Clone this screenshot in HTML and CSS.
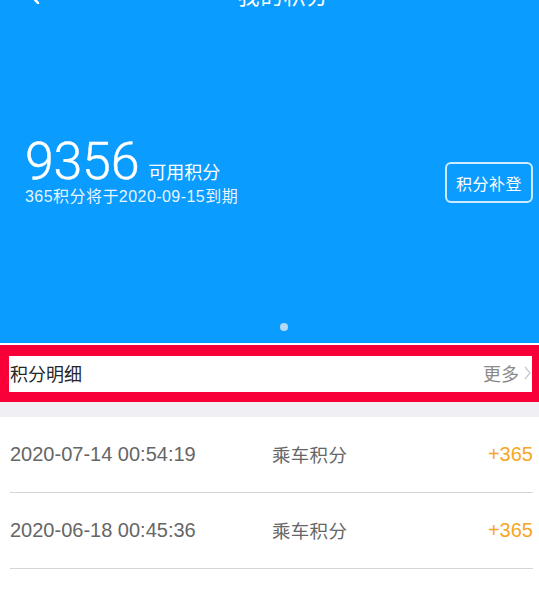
FILE: index.html
```html
<!DOCTYPE html>
<html lang="zh-CN">
<head>
<meta charset="utf-8">
<title>我的积分</title>
<link rel="stylesheet" href="styles.css">
</head>
<body>
<div class="page">
  <header class="hero">
    <nav class="nav">
      <span class="back">
        <svg width="12" height="20" viewBox="0 0 12 20"><polyline points="10,1 2,10 10,19" fill="none" stroke="#fff" stroke-width="2.6" stroke-linecap="round" stroke-linejoin="round"/></svg>
      </span>
      <span class="title">我的积分</span>
      <span></span>
    </nav>
    <section class="summary">
      <div class="points">
        <div class="points-line">
          <span class="points-num">9356</span>
          <span class="points-label">可用积分</span>
        </div>
        <div class="expire">365积分将于2020-09-15到期</div>
      </div>
      <button class="supplement">积分补登</button>
    </section>
    <div class="dots"><span class="dot"></span></div>
  </header>

  <div class="detail-head">
    <span class="detail-title">积分明细</span>
    <span class="more">更多<svg width="7" height="14" viewBox="0 0 7 14"><polyline points="1,1 6,7 1,13" fill="none" stroke="#c8c8cc" stroke-width="1.2"/></svg></span>
  </div>

  <div class="gap"></div>

  <ul class="records">
    <li class="record">
      <span class="rec-time">2020-07-14 00:54:19</span>
      <span class="rec-type">乘车积分</span>
      <span class="rec-val">+365</span>
    </li>
    <li class="record">
      <span class="rec-time">2020-06-18 00:45:36</span>
      <span class="rec-type">乘车积分</span>
      <span class="rec-val">+365</span>
    </li>
  </ul>
</div>
</body>
</html>
```

FILE: styles.css
```css
* { box-sizing: border-box; }

html, body {
  margin: 0;
  padding: 0;
  background: #ffffff;
  overflow: hidden;
}

body {
  font-family: "Liberation Sans", "Noto Sans CJK SC", sans-serif;
  width: 539px;
  height: 591px;
}

.page {
  width: 539px;
}

.hero {
  height: 343px;
  background: #0b9cff;
  display: flex;
  flex-direction: column;
  color: #fff;
}

.nav {
  height: 30px;
  margin-top: -21px;
  display: grid;
  grid-template-columns: 1fr auto 1fr;
  align-items: center;
  padding-left: 28px;
}

.back {
  display: flex;
  align-items: center;
}

.title {
  font-family: "Noto Sans CJK SC", sans-serif;
  font-size: 22px;
  line-height: 30px;
  letter-spacing: 1px;
  color: #fff;
}

.summary {
  margin-top: 131px;
  display: flex;
  justify-content: space-between;
  align-items: flex-start;
  padding: 0 6px 0 25px;
}

.points-line {
  display: flex;
  align-items: baseline;
  height: 44px;
}

.points-num {
  font-family: Roboto, "Liberation Sans", sans-serif;
  font-weight: 300;
  font-size: 52px;
  line-height: 44px;
  letter-spacing: -0.3px;
  -webkit-text-stroke: 0.4px #fff;
}

.points-label {
  font-family: "Noto Sans CJK SC", sans-serif;
  font-size: 18px;
  line-height: 24px;
  margin-left: 9px;
}

.expire {
  margin-top: 3px;
  font-family: "Liberation Sans", "Noto Sans CJK SC", sans-serif;
  font-size: 16px;
  line-height: 20px;
  letter-spacing: 0.45px;
  color: rgba(255, 255, 255, 0.92);
}

.supplement {
  margin-top: 22px;
  width: 88px;
  height: 41px;
  border: 2px solid rgba(255, 255, 255, 0.8);
  border-radius: 6px;
  background: transparent;
  color: #fff;
  font-family: "Noto Sans CJK SC", sans-serif;
  font-size: 16px;
  letter-spacing: 0.5px;
  padding: 0;
}

.dots {
  margin-top: auto;
  margin-bottom: 12px;
  display: flex;
  justify-content: center;
  padding-left: 28px;
}

.dot {
  width: 8px;
  height: 8px;
  border-radius: 50%;
  background: rgba(210, 228, 245, 0.85);
}

.detail-head {
  margin-top: 2px;
  height: 57px;
  border-style: solid;
  border-color: #f80037;
  border-width: 11px 7px 10px 9px;
  background: #fff;
  display: flex;
  justify-content: space-between;
  align-items: center;
  padding: 0 1px 2px 1px;
}

.detail-title {
  font-family: "Noto Sans CJK SC", sans-serif;
  font-size: 18px;
  color: #262626;
}

.more {
  display: flex;
  align-items: center;
  gap: 5px;
  font-family: "Noto Sans CJK SC", sans-serif;
  font-size: 18px;
  color: #8a8a8a;
}

.gap {
  height: 15px;
  background: #efeff4;
}

.records {
  list-style: none;
  margin: 0;
  padding: 0 6px 0 10px;
}

.record {
  height: 76px;
  border-bottom: 1px solid #d6d6d9;
  display: flex;
  align-items: center;
  color: #666;
}

.rec-time {
  font-size: 20px;
  width: 262px;
  letter-spacing: 0;
}

.rec-type {
  font-family: "Noto Sans CJK SC", sans-serif;
  font-size: 18.5px;
  letter-spacing: 0.3px;
  flex: 1;
  padding-bottom: 2px;
}

.rec-val {
  font-size: 20px;
  color: #f5a623;
}
```
